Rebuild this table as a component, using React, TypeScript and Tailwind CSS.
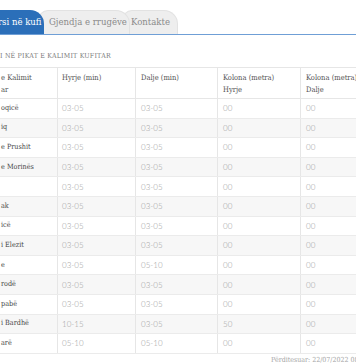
const rows = [
  ['oqicë', '03-05', '03-05', '00', '00'],
  ['iq', '03-05', '03-05', '00', '00'],
  ['e Prushit', '03-05', '03-05', '00', '00'],
  ['e Morinës', '03-05', '03-05', '00', '00'],
  ['', '03-05', '03-05', '00', '00'],
  ['ak', '03-05', '03-05', '00', '00'],
  ['icë', '03-05', '03-05', '00', '00'],
  ['i Elezit', '03-05', '03-05', '00', '00'],
  ['e', '03-05', '05-10', '00', '00'],
  ['rodë', '03-05', '03-05', '00', '00'],
  ['pabë', '03-05', '03-05', '00', '00'],
  ['i Bardhë', '10-15', '03-05', '50', '00'],
  ['arë', '05-10', '05-10', '00', '00'],
]

const grid = 'grid grid-cols-[57px_78px_82px_83px_100px]'
const slab = "font-['DejaVu_Serif_Condensed','DejaVu_Serif',serif] font-stretch-condensed"

export default function App() {
  return (
    <div className={`relative h-[364px] w-[356px] overflow-hidden bg-white ${slab}`}>
      <div className="w-[400px]">
        <div className="flex h-[35px] items-end border-b border-[#6f9fd6] pt-[10px]">
          <div className="relative z-20 flex h-[24px] w-[44px] items-center rounded-tr-[14px] bg-[#2b6fb9] text-[9.5px] whitespace-nowrap text-white">
            <span className="-ml-[2px]">rsi në kufi</span>
          </div>
          <div className="relative z-10 -ml-[6px] flex h-[24px] w-[92px] items-center rounded-tl-[10px] rounded-tr-[14px] border border-b-0 border-[#e2e2e2] bg-[#eeeeee] pl-[10px] text-[9.5px] whitespace-nowrap text-[#8a8a8a]">
            Gjendja e rrugëve
          </div>
          <div className="relative -ml-[8px] flex h-[24px] w-[56px] items-center rounded-tl-[10px] rounded-tr-[14px] border border-b-0 border-[#e2e2e2] bg-[#eeeeee] pl-[8px] text-[9.5px] whitespace-nowrap text-[#8a8a8a]">
            Kontakte
          </div>
        </div>

        <div className="mt-[16px] h-[16px] text-[7px] tracking-[0.2px] whitespace-nowrap text-[#7a7a7a]">
          I NË PIKAT E KALIMIT KUFITAR
        </div>

        <div className="border-t border-[#e6e6e6]">
          <div className={`${grid} h-[31px] border-b border-[#e6e6e6] text-[7.5px] leading-[12px] text-[#555]`}>
            <div className="pt-[4px] pl-[1px]">
              e Kalimit
              <br />
              ar
            </div>
            <div className="border-l border-[#e6e6e6] pt-[4px] pl-[4px]">Hyrje (min)</div>
            <div className="border-l border-[#e6e6e6] pt-[4px] pl-[5px]">Dalje (min)</div>
            <div className="border-l border-[#e6e6e6] pt-[4px] pl-[5px]">
              Kolona (metra)
              <br />
              Hyrje
            </div>
            <div className="border-l border-[#e6e6e6] pt-[4px] pl-[5px]">
              Kolona (metra)
              <br />
              Dalje
            </div>
          </div>
          {rows.map((r, i) => (
            <div
              key={i}
              className={`${grid} h-[19.6px] border-b border-[#ebebeb] ${i % 2 === 1 ? 'bg-[#f7f7f7]' : 'bg-white'}`}
            >
              <div className="flex items-center pl-[1px] text-[7.2px] whitespace-nowrap text-[#444]">
                {r[0]}
              </div>
              {r.slice(1).map((v, j) => (
                <div
                  key={j}
                  className={`flex items-center border-l border-[#e6e6e6] font-['Lato',sans-serif] text-[8px] font-light text-[#9a9a9a] ${j === 0 ? 'pl-[4px]' : 'pl-[5px]'}`}
                >
                  {v}
                </div>
              ))}
            </div>
          ))}
        </div>

        <div className="pt-[1px] pl-[271px] text-[7px] whitespace-nowrap text-[#a5a5a5]">
          Përditesuar: 22/07/2022 08:00
        </div>
      </div>
    </div>
  )
}
